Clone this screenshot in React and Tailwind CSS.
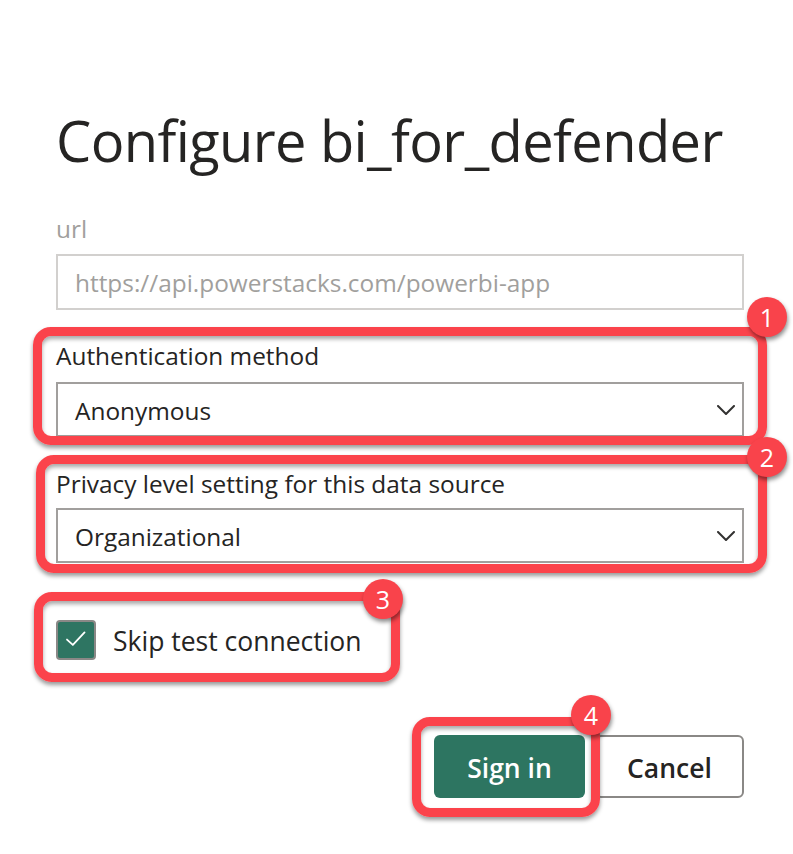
import React from "react";

const FONT = "font-['Open_Sans','Noto_Sans',sans-serif]";

function Chevron() {
  return (
    <svg width="18" height="10" viewBox="0 0 18 10" fill="none">
      <path d="M1 1 L9 9 L17 1" stroke="#323130" strokeWidth="2" strokeLinecap="round" strokeLinejoin="round" />
    </svg>
  );
}

function Select({ value }) {
  return (
    <div className="flex h-[55px] w-full items-center justify-between border-2 border-[#a19f9d] bg-white pl-[17px] pr-[7px]">
      <span className="whitespace-nowrap pt-[2px] text-[24.4px] leading-[32px] text-[#252423]">{value}</span>
      <Chevron />
    </div>
  );
}

function Frame({ className, num, badge }) {
  return (
    <div className={`pointer-events-none absolute ${className}`}>
      <div className="absolute inset-0 rounded-[18px] border-[9px] border-[#fb434b] shadow-[0_3px_4px_rgba(0,0,0,0.4),inset_0_3px_4px_rgba(0,0,0,0.35)]" />
      <div
        className={`absolute flex h-[40px] w-[40px] items-center justify-center rounded-full bg-[#f9434b] text-[25px] leading-none text-white shadow-[1px_3px_4px_rgba(0,0,0,0.45)] ${badge}`}
      >
        {num}
      </div>
    </div>
  );
}

export default function App() {
  return (
    <div className={`relative h-[854px] w-[793px] overflow-hidden bg-white ${FONT}`}>
      <div className="flex flex-col pl-[56px] pr-[49px] pt-[105px]">
        <h1 className="whitespace-nowrap text-[56px] font-normal leading-[70px] tracking-[-0.6px] text-[#252423]">
          Configure bi_for_defender
        </h1>

        <div className="mt-[38px] text-[24.4px] leading-[32px] text-[#a19f9d]">url</div>
        <div className="mt-[9px] flex h-[56px] items-center border-2 border-[#d2d0ce] pl-[17px]">
          <span className="whitespace-nowrap pt-[2px] text-[24.4px] leading-[32px] text-[#a19f9d]">
            https://api.powerstacks.com/powerbi-app
          </span>
        </div>

        <div className="mt-[30px] whitespace-nowrap text-[24.4px] leading-[32px] text-[#252423]">Authentication method</div>
        <div className="mt-[10px]">
          <Select value="Anonymous" />
        </div>

        <div className="mt-[31px] whitespace-nowrap text-[24.4px] leading-[32px] text-[#252423]">
          Privacy level setting for this data source
        </div>
        <div className="mt-[8px]">
          <Select value="Organizational" />
        </div>

        <div className="mt-[57px] flex items-center gap-[17px]">
          <div className="flex h-[40px] w-[40px] items-center justify-center rounded-[4px] border-2 border-[#8a8886] bg-[#2e7562]">
            <svg width="40" height="40" viewBox="0 0 40 40" fill="none">
              <path d="M10 19.5 L16.5 25.5 L29.5 11.5" stroke="white" strokeWidth="2" strokeLinecap="round" strokeLinejoin="round" />
            </svg>
          </div>
          <span className="whitespace-nowrap pt-[2px] text-[26.5px] leading-[36px] text-[#252423]">Skip test connection</span>
        </div>

        <div className="mt-[75px] flex justify-end gap-[10px]">
          <button className="flex h-[63px] w-[151px] items-center justify-center rounded-[6px] bg-[#2d7561] pt-[5px] text-[26.5px] font-semibold text-white">
            Sign in
          </button>
          <button className="flex h-[63px] w-[149px] items-center justify-center rounded-[6px] border-2 border-[#8a8886] bg-white pt-[5px] text-[26.5px] font-semibold text-[#252423]">
            Cancel
          </button>
        </div>
      </div>

      <Frame className="left-[33px] top-[327px] h-[118px] w-[734px]" num="1" badge="right-[-20px] top-[-30px]" />
      <Frame className="left-[36px] top-[455px] h-[118px] w-[731px]" num="2" badge="right-[-20px] top-[-18px]" />
      <Frame className="left-[34px] top-[592px] h-[90px] w-[366px]" num="3" badge="right-[-3px] top-[-13px]" />
      <Frame className="left-[412px] top-[717px] h-[100px] w-[188px]" num="4" badge="right-[-11px] top-[-22px]" />
    </div>
  );
}
